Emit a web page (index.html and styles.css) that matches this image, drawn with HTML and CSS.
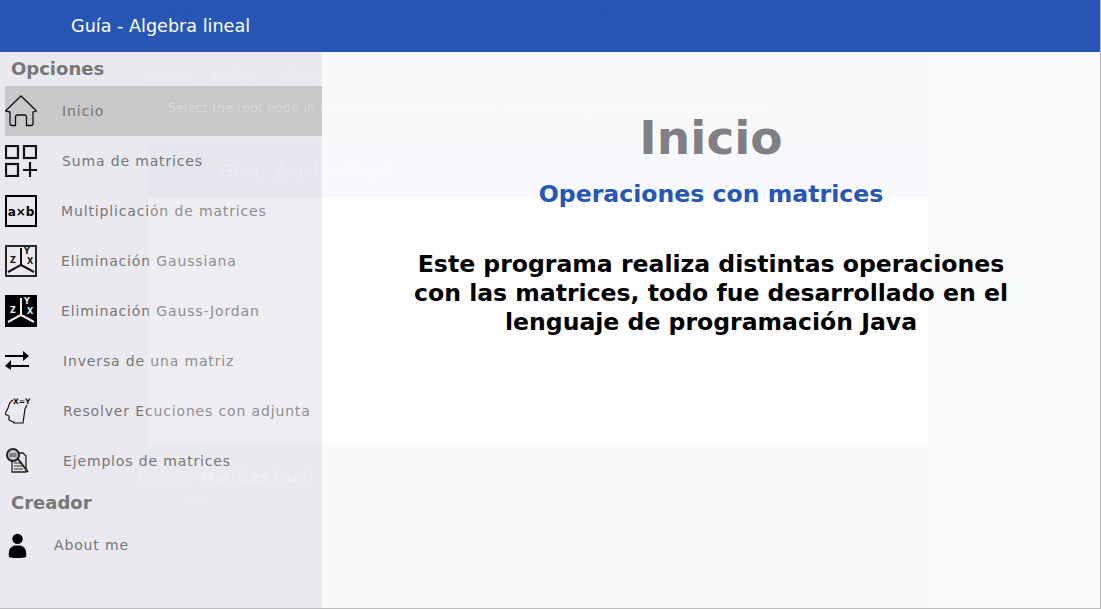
FILE: index.html
```html
<!DOCTYPE html>
<html>
<head>
	<meta charset="utf-8">
	<title>Guía - Algebra lineal</title>
	<link rel="stylesheet" href="styles.css">
</head>
<body>

<div class="window">

<header class="topbar">
	<h1>Guía - Algebra lineal</h1>
</header>

<div class="content">

<nav class="sidebar">
	<h2 class="group">Opciones</h2>

	<a class="item active">
		<svg class="icon" viewBox="0 0 32 32" fill="none" stroke="#111" stroke-width="1.300"><path d="M.5 16 16 1l15.500 15-3.500 1v11.500a2 2 0 0 1-2 2h-4.500V22a2 2 0 0 0-2-2h-7a2 2 0 0 0-2 2v8.500H7a2 2 0 0 1-2-2V17z"/></svg>
		<span class="label">Inicio</span>
	</a>
	<a class="item">
		<svg class="icon" viewBox="0 0 32 32" fill="none" stroke="#111" stroke-width="2.200"><rect x="1" y="1" width="12" height="12"/><rect x="19" y="1" width="12" height="12"/><rect x="1" y="19" width="12" height="12"/><path d="M25 17v15M18 25h14"/></svg>
		<span class="label">Suma de matrices</span>
	</a>
	<a class="item">
		<svg class="icon" viewBox="0 0 32 32"><rect x="1" y="1" width="30" height="30" fill="none" stroke="#000" stroke-width="2"/><text class="glyph" x="16" y="21" text-anchor="middle">a×b</text></svg>
		<span class="label shift-l">Multiplicación de matrices</span>
	</a>
	<a class="item">
		<svg class="icon" viewBox="0 0 32 32"><rect x="1" y="1" width="30" height="30" fill="none" stroke="#111" stroke-width="1.800"/><path d="M16 3v17L3 27M16 20l13 7" fill="none" stroke="#111" stroke-width="2"/><text class="axis" x="19" y="9">Y</text><text class="axis" x="5" y="18">Z</text><text class="axis" x="22" y="19">X</text></svg>
		<span class="label shift-l">Eliminación Gaussiana</span>
	</a>
	<a class="item">
		<svg class="icon" viewBox="0 0 32 32"><rect width="32" height="32" fill="#000"/><path d="M16 3v17L3 27M16 20l13 7" fill="none" stroke="#eee" stroke-width="2"/><text class="axis inv" x="19" y="9">Y</text><text class="axis inv" x="5" y="18">Z</text><text class="axis inv" x="22" y="19">X</text></svg>
		<span class="label shift-l">Eliminación Gauss-Jordan</span>
	</a>
	<a class="item">
		<svg class="icon" viewBox="0 0 32 32"><path d="M0 10h18V6l6 5-6 5v-4H0zM24 20H6v-5l-6 6 6 4v-3h18z"/></svg>
		<span class="label shift-r">Inversa de una matriz</span>
	</a>
	<a class="item">
		<svg class="icon" viewBox="0 0 32 32"><path d="M8 5C4 7 4 10 3 13L0 19l4 2v4l4 2h1v1h9l2-14 2-4" fill="none" stroke="#111" stroke-width="1.200"/><text class="head" x="8" y="9">X=Y</text></svg>
		<span class="label shift-r">Resolver Ecuciones con adjunta</span>
	</a>
	<a class="item">
		<svg class="icon" viewBox="0 0 32 32"><path d="M7 8h11l3 3v16H7z" fill="#e4e4e4" stroke="#222" stroke-width="1.300"/><path d="M9 18h8M9 21h8M9 24h9" stroke="#333"/><circle cx="8" cy="10" r="6" fill="#c4c8cc" stroke="#222" stroke-width="2"/><path d="M4.500 9h7M4.500 11h7" stroke="#333"/><path d="M13 14l10 13" stroke="#222" stroke-width="2"/></svg>
		<span class="label shift-r">Ejemplos de matrices</span>
	</a>

	<h2 class="group">Creador</h2>

	<a class="item about">
		<svg class="icon-small" viewBox="0 0 20 26"><circle cx="10" cy="6" r="5.500"/><path d="M1 25c-1-8 2-11 6-12h6c4 1 7 4 6 12-3 1.500-15 1.500-18 0z"/></svg>
		<span class="label">About me</span>
	</a>
</nav>

<main class="page">
	<div class="page-band"></div>
	<div class="page-panel"></div>
	<div class="page-right"></div>

	<div class="intro">
		<h2 class="page-title">Inicio</h2>
		<h3 class="page-sub">Operaciones con matrices</h3>
		<p class="page-text">Este programa realiza distintas operaciones<br>con las matrices, todo fue desarrollado en el<br>lenguaje de programación Java</p>
	</div>
</main>

</div>

<!-- the IDE window behind, seen through the translucent frame -->
<div class="behind" aria-hidden="true">
	<div class="b-topline">
		<span>&lt;default config&gt;</span>
		<span>225.9/349.0MB</span>
	</div>
	<div class="b-tabs">
		<span>Source</span><span>Design</span><span>History</span>
	</div>
	<div class="b-hint">Select the root node in Navigator to access various useful settings of the form (in Properties).</div>
	<div class="b-form">
		<div class="b-form-band">Guía - Algebra lineal</div>
		<div class="b-form-body"></div>
	</div>
	<div class="b-output">Output - <b>Matrices (run)</b></div>
	<div class="b-run">run:</div>
	<div class="b-palette">
		<p class="b-head">Swing Containers</p>
		<p>Panel</p>
		<p>Split Pane</p>
		<p>Tool Bar</p>
		<p>Internal Frame</p>
		<p class="b-head">Swing Controls</p>
		<p>Label</p>
		<p>Toggle Button</p>
		<p class="b-after">Progress Bar</p>
		<p class="b-head b-last">Properties</p>
	</div>
</div>

</div>

</body>
</html>
```

FILE: styles.css
```css
html, body {
	margin: 0;
	height: 100%;
}

body {
	font-family: "DejaVu Sans", sans-serif;
	background-color: #f9f9f9;
}

.window {
	position: relative;
	height: 609px;
	box-sizing: border-box;
	border-right: 1px solid #bbb;
	border-bottom: 1px solid #bbb;
	display: flex;
	flex-direction: column;
	overflow: hidden;
}

.topbar {
	height: 52px;
	flex: none;
	background-color: #2756b6;
	display: flex;
	align-items: center;
	padding-left: 71px;
}

.topbar h1 {
	margin: 0;
	font-size: 17.600px;
	font-weight: normal;
	color: #fff;
}

.content {
	flex: 1;
	display: flex;
	min-height: 0;
}

.sidebar {
	width: 322px;
	flex: none;
	background-color: #e9e9ef;
	padding-left: 5px;
	box-sizing: border-box;
}

.group {
	margin: 0;
	padding-left: 6px;
	height: 34px;
	line-height: 34px;
	font-size: 18px;
	font-weight: bold;
	color: #777;
}

.item {
	height: 50px;
	display: flex;
	align-items: center;
}

.item.active {
	background-color: #c8c8c8;
}

.item.about {
	padding-left: 3px;
}

.icon {
	width: 32px;
	height: 32px;
	flex: none;
}

.icon-small {
	width: 19px;
	height: 25px;
	flex: none;
}

.label {
	margin-left: 25px;
	font-size: 14px;
	letter-spacing: .85px;
	color: #777;
}

.label.shift-l {
	margin-left: 24px;
}

.label.shift-r {
	margin-left: 26px;
}

.about .label {
	margin-left: 27px;
}

.glyph {
	font-size: 12px;
	font-weight: bold;
}

.axis {
	font-size: 8px;
	font-weight: bold;
	fill: #111;
}

.axis.inv {
	fill: #eee;
}

.head {
	font-size: 7.500px;
	font-weight: bold;
	fill: #111;
}

.page {
	flex: 1;
	position: relative;
	min-width: 0;
}

.page-band, .page-panel, .page-right {
	position: absolute;
}

.page-band {
	left: 0;
	top: 93px;
	width: 606px;
	height: 53px;
	background-color: #f8f9fd;
}

.page-panel {
	left: 0;
	top: 146px;
	width: 606px;
	height: 246px;
	background-color: #fff;
}

.page-right {
	left: 606px;
	top: 0;
	right: 0;
	bottom: 0;
	background-color: #f9fafa;
}

.intro {
	position: relative;
	text-align: center;
}

.page-title {
	margin: 58px 0 0;
	font-size: 47px;
	line-height: 56px;
	font-weight: bold;
	color: #808084;
}

.page-sub {
	margin: 14px 0 0;
	font-size: 23.600px;
	line-height: 28px;
	font-weight: bold;
	color: #2756b6;
}

.page-text {
	margin: 42px 0 0;
	font-size: 23.550px;
	line-height: 29px;
	font-weight: bold;
	color: #000;
}

/* see-through layer */
.behind {
	position: absolute;
	inset: 0;
	pointer-events: none;
	font-size: 14px;
	color: rgba(255, 255, 255, .28);
}

.behind p {
	margin: 0;
}

.b-topline, .b-tabs, .b-hint, .b-form, .b-output, .b-run, .b-palette {
	position: absolute;
}

.b-topline {
	left: 147px;
	top: 2px;
	color: rgba(10, 30, 90, .07);
	display: flex;
	gap: 270px;
}

.b-tabs {
	left: 145px;
	top: 69px;
	display: flex;
	gap: 22px;
	font-size: 13px;
}

.b-hint {
	left: 168px;
	top: 100px;
	font-size: 12.500px;
	letter-spacing: .2px;
	white-space: nowrap;
}

.b-form {
	left: 148px;
	top: 145px;
	width: 174px;
}

.b-form-band {
	height: 53px;
	padding-left: 72px;
	box-sizing: border-box;
	line-height: 53px;
	font-size: 17px;
	white-space: nowrap;
	background-color: rgba(60, 90, 200, .02);
}

.b-form-body {
	height: 246px;
	background-color: rgba(255, 255, 255, .18);
}

.b-output {
	left: 138px;
	top: 470px;
	font-size: 14px;
	line-height: 14px;
}

.b-run {
	left: 183px;
	top: 492px;
	font-size: 13px;
}

.b-palette {
	left: 968px;
	top: 65px;
	font-size: 13px;
	line-height: 21px;
	letter-spacing: .4px;
	white-space: nowrap;
}

.b-head {
	margin-left: -3px !important;
}

.b-after {
	margin-top: 84px !important;
}

.b-last {
	margin: 32px 0 0 -8px !important;
}
```
